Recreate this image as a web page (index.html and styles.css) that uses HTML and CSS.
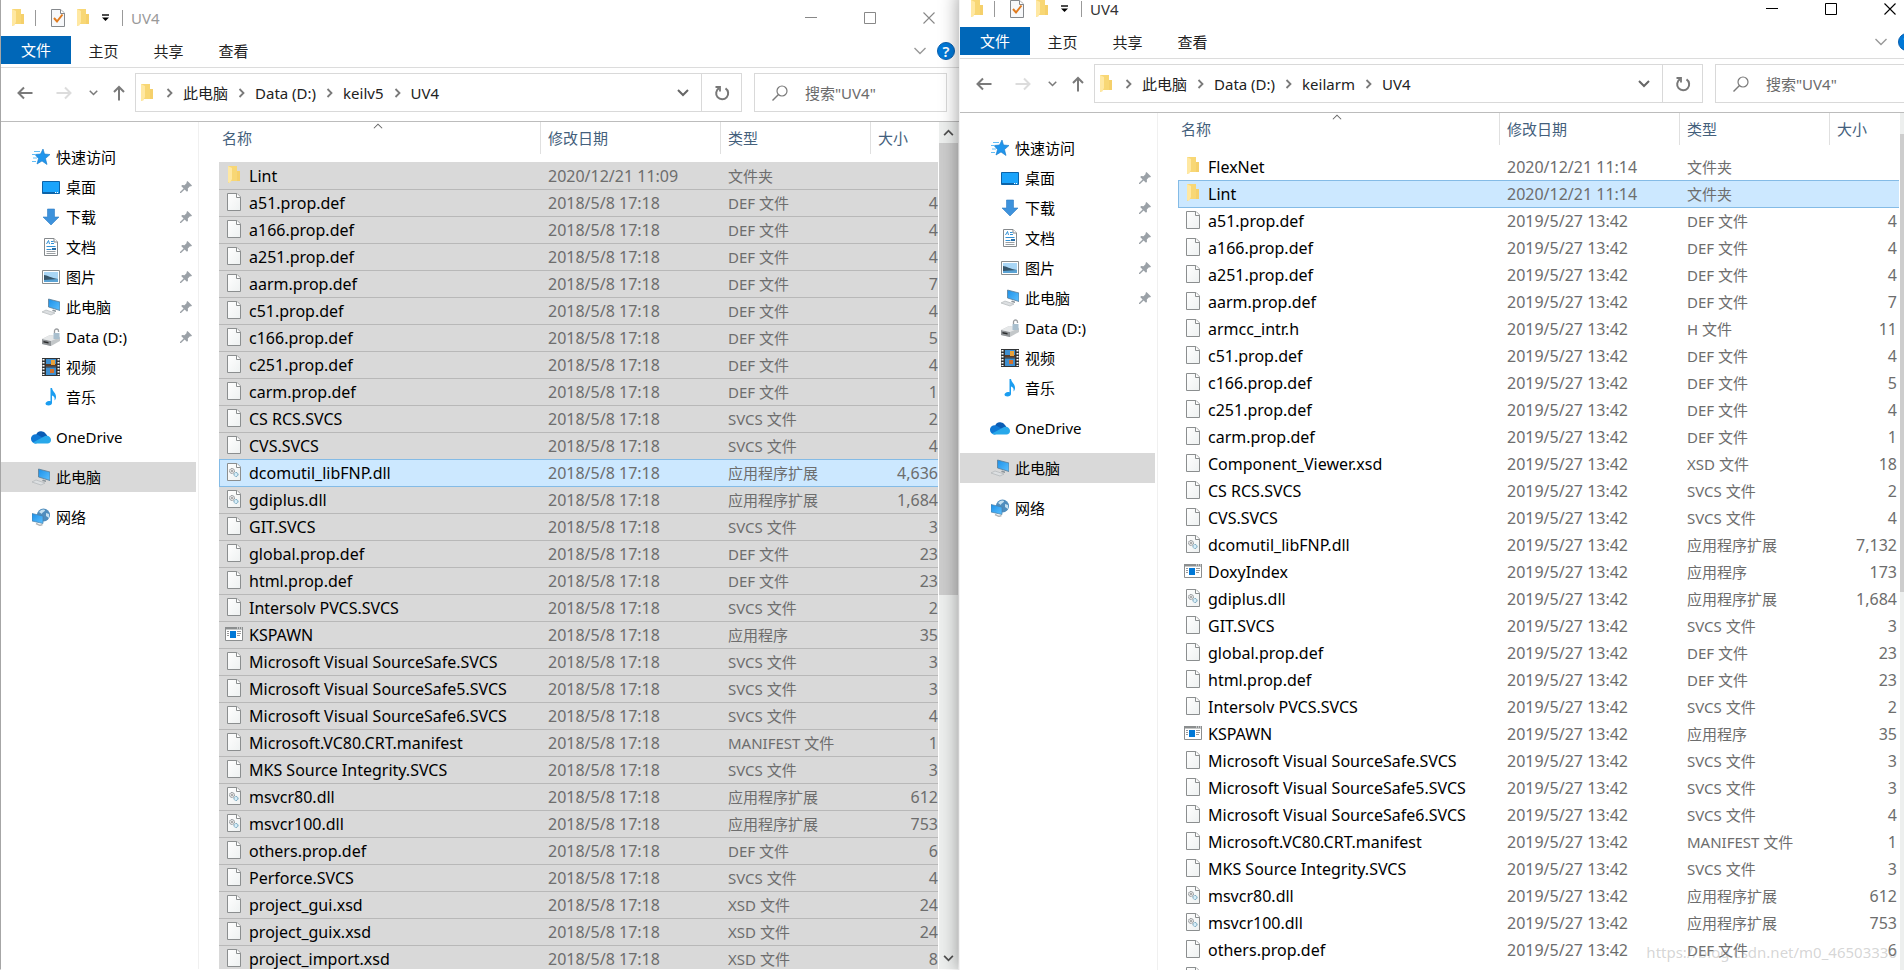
FILE: index.html
```
<!DOCTYPE html>
<html lang="zh-CN">
<head>
<meta charset="utf-8">
<title>UV4</title>
<link rel="stylesheet" href="styles.css">
</head>
<body>
<svg class="defs" aria-hidden="true">
  <defs>
    <linearGradient id="paper" x1="0" y1="0" x2="1" y2="1"><stop offset="0" stop-color="#fff"/><stop offset="1" stop-color="#eef1f1"/></linearGradient>
    <linearGradient id="sky" x1="0" y1="0" x2="1" y2="1"><stop offset="0" stop-color="#1c90e8"/><stop offset="1" stop-color="#5cc0ff"/></linearGradient>
  </defs>
  <symbol id="folder" viewBox="0 0 18 18"><path d="M3 0h9v5h3v10H6l-3 2z" fill="#f8d775"/><path d="M3 0l4 2v11l-2 4-2-1z" fill="#ffe8a2"/><path d="M12 5h3v10h-3z" fill="#f5d06b"/></symbol>
  <symbol id="doc" viewBox="0 0 18 18"><path d="M2.5.5h9.500l3.500 3.500v13.500h-13z" fill="url(#paper)" stroke="#8b8e8f"/><path d="M11.500.5v4h4" fill="#fff" stroke="#8b8e8f"/></symbol>
  <symbol id="dll" viewBox="0 0 18 18"><use href="#doc"/><circle cx="7" cy="8" r="2.500" fill="#e3e3e3" stroke="#7c8185" stroke-dasharray="1.200 .5"/><circle cx="7" cy="8" r=".8" fill="#666"/><circle cx="11" cy="11.500" r="2" fill="#d7eef9" stroke="#5f97b2" stroke-dasharray="1.200 .5"/></symbol>
  <symbol id="exe" viewBox="0 0 18 18"><path d="M.5 2.500h17v13H.5z" fill="#fff" stroke="#8b8e8f"/><path d="M0 2h18v2.500H0z" fill="#8b8e8f"/><path d="M12 3h1m1 0h1m1 0h1" stroke="#fff"/><path d="M5 6h6v7H5z" fill="#0078d7"/><path d="M2 6.500h2M2 8.500h2M2 10.500h2M12 6.500h4M12 8.500h4M12 10.500h3" stroke="#999"/></symbol>
  <symbol id="check" viewBox="0 0 18 18"><path d="M2.500.5h9l4 3.500v13.500h-13z" fill="#f7f8fa" stroke="#85888c"/><path d="M11.500.5v4h4" fill="#fff" stroke="#85888c"/><path d="M5 9l3 3.500L13.500 5.500" fill="none" stroke="#e07b1f" stroke-width="2"/></symbol>
  <symbol id="star" viewBox="0 0 18 18"><path d="M11 1l1.500 5 5.500.5-4.500 4 1.500 6-5-3.500-5 3 1.500-5.500L3 6.500l5.500-.5z" fill="#2095ec" stroke="#1478c8" stroke-width=".6"/><path d="M2 3.500h6M0 6.500h4M1 10h4M0 13.500h4" stroke="#63bdf5"/></symbol>
  <symbol id="desktop" viewBox="0 0 18 18"><path d="M.5 3.500h17v12H.5z" fill="#1ba4fb" stroke="#0c63a8"/><path d="M1 14.500h13" stroke="#0c63a8"/><path d="M13 14.500h1m1 0h1" stroke="#fff"/></symbol>
  <symbol id="down" viewBox="0 0 18 18"><path d="M5.500 1h7v8H17l-8 8-8-8h4.500z" fill="#3d92dc" stroke="#2f7cc4" stroke-width=".6"/></symbol>
  <symbol id="text" viewBox="0 0 18 18"><path d="M2.500.5h9.500l3.500 3.500v13.500h-13z" fill="#fff" stroke="#85898c"/><path d="M12 .5v3.500h3.500" fill="#fff" stroke="#85898c"/><path d="M4.500 6l2-3.500 1 3.500M9 3.500h2.500M9 5.500h3M4.500 8.500h9M4.500 11.500h5" fill="none" stroke="#3191d6"/><path d="M4.500 13.500h9M4.500 15.500h9" stroke="#9a9fa3"/><path d="M10 10h4v2h-4z" fill="#2a6fa8"/></symbol>
  <symbol id="image" viewBox="0 0 18 18"><path d="M.5 2.500h17v13H.5z" fill="#fff" stroke="#8b8e8f"/><path d="M2 4h14v10H2z" fill="#a9d6f5"/><path d="M2 7c3 0 7 3 14 4v3H2z" fill="#36566b"/><path d="M2 12l14-1v3H2z" fill="#5ba3d4"/></symbol>
  <symbol id="pc" viewBox="0 0 18 18"><path d="M6.500 1l11.500 3v8.500L6.500 9z" fill="url(#sky)" stroke="#5d7c94" stroke-width=".8"/><path d="M11 11.500l3 1v1.500l-4-1z" fill="#8d959a"/><path d="M0 14l4-2 9 3-4 2z" fill="#dcdfe1" stroke="#a9aeb1" stroke-width=".6"/></symbol>
  <symbol id="drive" viewBox="0 0 18 18"><path d="M0 11l8-4 10 2v4l-9 5-9-2z" fill="#c3c7c9"/><path d="M0 11l9 2v5l-9-2z" fill="#8f9396"/><path d="M0 11l8-4 10 2-9 4z" fill="#e6e8e9"/><path d="M1.500 13l5 1v1.500l-5-1z" fill="#2a2c2d"/><path d="M11.500 5h6v6h-6z" fill="#a9bfce"/><path d="M12.500 5V3a2 2 0 0 1 4 0v1" fill="none" stroke="#9a9da0" stroke-width="1.300"/></symbol>
  <symbol id="video" viewBox="0 0 18 18"><path d="M0 0h18v18H0z" fill="#303335"/><path d="M4 1h10v7.500H4zM4 9.500h10V17H4z" fill="#3e8fd0"/><path d="M4 6h10v2.500H4z" fill="#5a3a24"/><path d="M9 2h4v5H9z" fill="#e8a13a"/><path d="M8 11h4v4H8z" fill="#d3712d"/><path d="M1.500 1v16M16.500 1v16" stroke="#fff" stroke-width="2" stroke-dasharray="1.500 1.500"/></symbol>
  <symbol id="music" viewBox="0 0 18 18"><path d="M8.500 0h1.500c.5 4 4.500 5 4 9.500-.2 1.500-1 2.500-1.500 3 .8-3.500-1-4.500-2.500-5v7.500c0 1.500-1.500 2.500-3.500 2.500S3.500 16.500 3.500 15.500s1.500-2.500 3.500-2.500c.6 0 1 0 1.500.3z" fill="#1b9df0"/></symbol>
  <symbol id="cloud" viewBox="0 0 20 14"><path d="M5 5a5.500 5.500 0 0 1 10-1c1 1 1.500 2 1.500 3L8 10z" fill="#0a5cb4"/><path d="M0 9a4.500 4.500 0 0 1 6.500-4.300L14 9l-9 4.500A4.500 4.500 0 0 1 0 9z" fill="#0f78d4"/><path d="M2 12.500L14 6c3-1 6 .8 6 4 0 2-1.500 3.500-3.500 3.500h-12c-1 0-2-.4-2.500-1z" fill="#28a8ea"/></symbol>
  <symbol id="net" viewBox="0 0 18 18"><circle cx="11.500" cy="7" r="6.500" fill="#4f8dbd"/><path d="M7 4c2-3 5-3 6-2 0 2-3 2-3 4zM14 5l3 1v4l-3-2z" fill="#c4e0f0"/><path d="M0 5.500l11 2.500v7.500L0 13z" fill="url(#sky)" stroke="#4a7ea6" stroke-width=".7"/><path d="M4 15.500l4 2 2.500-1" fill="none" stroke="#b3b8bb" stroke-width="1.400"/></symbol>
  <symbol id="pin" viewBox="0 0 12 12"><path d="M7.500 0L12 4.500 11 5.500l-1-.2L7.800 7.600l.2 2.200L7 10.800 4.600 8.400 1 12H0v-1l3.600-3.600L1.200 5l1-1 2.300.2L6.700 2l-.2-1z" fill="#9ba1a7"/></symbol>
  <symbol id="left" viewBox="0 0 16 14"><path d="M15.500 7H1.500M7 1.500L1.500 7 7 12.500" fill="none" stroke="currentColor" stroke-width="2"/></symbol>
  <symbol id="right" viewBox="0 0 16 14"><path d="M.5 7h14M9 1.500L14.500 7 9 12.500" fill="none" stroke="currentColor" stroke-width="2"/></symbol>
  <symbol id="up" viewBox="0 0 12 16"><path d="M6 15.500V2M1 7l5-5 5 5" fill="none" stroke="currentColor" stroke-width="2"/></symbol>
  <symbol id="chev" viewBox="0 0 12 8"><path d="M1 1l5 5 5-5" fill="none" stroke="currentColor" stroke-width="2"/></symbol>
  <symbol id="thin" viewBox="0 0 12 8"><path d="M.5 1L6 6.500 11.500 1" fill="none" stroke="currentColor" stroke-width="1.400"/></symbol>
  <symbol id="sep" viewBox="0 0 6 10"><path d="M1 1l4 4-4 4" fill="none" stroke="currentColor" stroke-width="1.800"/></symbol>
  <symbol id="reload" viewBox="0 0 16 16"><path d="M5 3.200A6 6 0 1 0 11.500 3.300" fill="none" stroke="currentColor" stroke-width="2"/><path d="M1.500 2H6v4.500" fill="none" stroke="currentColor" stroke-width="1.800"/></symbol>
  <symbol id="find" viewBox="0 0 16 16"><circle cx="10" cy="6" r="5" fill="none" stroke="currentColor" stroke-width="1.200"/><path d="M6.500 9.500L.5 15.500" stroke="currentColor" stroke-width="1.400"/></symbol>
  <symbol id="more" viewBox="0 0 8 8"><path d="M0 1h7" stroke="currentColor" stroke-width="1.400"/><path d="M0 3.500h7L3.500 7z" fill="currentColor"/></symbol>
  <symbol id="min" viewBox="0 0 12 12"><path d="M0 5.500h12" stroke="currentColor"/></symbol>
  <symbol id="max" viewBox="0 0 12 12"><path d="M.5.5h11v11H.5z" fill="none" stroke="currentColor"/></symbol>
  <symbol id="close" viewBox="0 0 12 12"><path d="M.5.5l11 11M11.500.5l-11 11" stroke="currentColor" stroke-width="1.100"/></symbol>
</svg>

<div class="screen">
<section class="window selected-all" aria-label="UV4">
  <header class="title">
    <svg class="icon"><use href="#folder"/></svg><i class="rule"></i>
    <button class="quick" aria-label="属性"><svg class="icon"><use href="#check"/></svg></button>
    <button class="quick" aria-label="新建文件夹"><svg class="icon"><use href="#folder"/></svg></button>
    <button class="more" aria-label="自定义"><svg><use href="#more"/></svg></button><i class="rule"></i>
    <h1>UV4</h1>
    <div class="controls">
      <button aria-label="最小化"><svg><use href="#min"/></svg></button>
      <button aria-label="最大化"><svg><use href="#max"/></svg></button>
      <button aria-label="关闭"><svg><use href="#close"/></svg></button>
    </div>
  </header>
  <nav class="ribbon">
    <button class="tab file">文件</button><button class="tab">主页</button><button class="tab">共享</button><button class="tab">查看</button>
    <button class="fold" aria-label="展开功能区"><svg><use href="#thin"/></svg></button>
    <button class="help" aria-label="帮助">?</button>
  </nav>
  <div class="bar">
    <button class="go" aria-label="后退"><svg class="arrow"><use href="#left"/></svg></button>
    <button class="go off" aria-label="前进"><svg class="arrow"><use href="#right"/></svg></button>
    <button class="recent" aria-label="最近"><svg class="small"><use href="#chev"/></svg></button>
    <button class="parent" aria-label="上移"><svg class="tall"><use href="#up"/></svg></button>
    <div class="address">
      <svg class="icon"><use href="#folder"/></svg>
      <svg class="sep"><use href="#sep"/></svg><button>此电脑</button>
      <svg class="sep"><use href="#sep"/></svg><button>Data (D:)</button>
      <svg class="sep"><use href="#sep"/></svg><button>keilv5</button>
      <svg class="sep"><use href="#sep"/></svg><button>UV4</button>
      <button class="drop" aria-label="历史"><svg class="drop-icon"><use href="#chev"/></svg></button>
      <button class="reload" aria-label="刷新"><svg><use href="#reload"/></svg></button>
    </div>
    <label class="search"><svg><use href="#find"/></svg><input type="search" aria-label="搜索" placeholder='搜索"UV4"'></label>
  </div>
  <div class="content">
    <nav class="tree">
      <a href="#"><svg class="icon"><use href="#star"/></svg>快速访问</a>
      <a href="#" class="sub"><svg class="icon"><use href="#desktop"/></svg>桌面<svg class="pin"><use href="#pin"/></svg></a>
      <a href="#" class="sub"><svg class="icon"><use href="#down"/></svg>下载<svg class="pin"><use href="#pin"/></svg></a>
      <a href="#" class="sub"><svg class="icon"><use href="#text"/></svg>文档<svg class="pin"><use href="#pin"/></svg></a>
      <a href="#" class="sub"><svg class="icon"><use href="#image"/></svg>图片<svg class="pin"><use href="#pin"/></svg></a>
      <a href="#" class="sub"><svg class="icon"><use href="#pc"/></svg>此电脑<svg class="pin"><use href="#pin"/></svg></a>
      <a href="#" class="sub"><svg class="icon"><use href="#drive"/></svg>Data (D:)<svg class="pin"><use href="#pin"/></svg></a>
      <a href="#" class="sub"><svg class="icon"><use href="#video"/></svg>视频</a>
      <a href="#" class="sub"><svg class="icon"><use href="#music"/></svg>音乐</a>
      <a href="#" class="root"><svg class="icon cloud"><use href="#cloud"/></svg>OneDrive</a>
      <a href="#" class="root current"><svg class="icon"><use href="#pc"/></svg>此电脑</a>
      <a href="#" class="root"><svg class="icon"><use href="#net"/></svg>网络</a>
    </nav>
    <div class="list">
      <table>
        <colgroup><col><col class="c-date"><col class="c-type"><col class="c-size"></colgroup>
        <thead><tr><th><span>名称<svg class="sort"><use href="#thin"/></svg></span></th><th><span>修改日期</span></th><th><span>类型</span></th><th><span>大小</span></th></tr></thead>
        <tbody>
          <tr><td><svg><use href="#folder"/></svg>Lint</td><td>2020/12/21 11:09</td><td>文件夹</td><td></td></tr>
          <tr><td><svg><use href="#doc"/></svg>a51.prop.def</td><td>2018/5/8 17:18</td><td>DEF 文件</td><td>4</td></tr>
          <tr><td><svg><use href="#doc"/></svg>a166.prop.def</td><td>2018/5/8 17:18</td><td>DEF 文件</td><td>4</td></tr>
          <tr><td><svg><use href="#doc"/></svg>a251.prop.def</td><td>2018/5/8 17:18</td><td>DEF 文件</td><td>4</td></tr>
          <tr><td><svg><use href="#doc"/></svg>aarm.prop.def</td><td>2018/5/8 17:18</td><td>DEF 文件</td><td>7</td></tr>
          <tr><td><svg><use href="#doc"/></svg>c51.prop.def</td><td>2018/5/8 17:18</td><td>DEF 文件</td><td>4</td></tr>
          <tr><td><svg><use href="#doc"/></svg>c166.prop.def</td><td>2018/5/8 17:18</td><td>DEF 文件</td><td>5</td></tr>
          <tr><td><svg><use href="#doc"/></svg>c251.prop.def</td><td>2018/5/8 17:18</td><td>DEF 文件</td><td>4</td></tr>
          <tr><td><svg><use href="#doc"/></svg>carm.prop.def</td><td>2018/5/8 17:18</td><td>DEF 文件</td><td>1</td></tr>
          <tr><td><svg><use href="#doc"/></svg>CS RCS.SVCS</td><td>2018/5/8 17:18</td><td>SVCS 文件</td><td>2</td></tr>
          <tr><td><svg><use href="#doc"/></svg>CVS.SVCS</td><td>2018/5/8 17:18</td><td>SVCS 文件</td><td>4</td></tr>
          <tr class="active"><td><svg><use href="#dll"/></svg>dcomutil_libFNP.dll</td><td>2018/5/8 17:18</td><td>应用程序扩展</td><td>4,636</td></tr>
          <tr><td><svg><use href="#dll"/></svg>gdiplus.dll</td><td>2018/5/8 17:18</td><td>应用程序扩展</td><td>1,684</td></tr>
          <tr><td><svg><use href="#doc"/></svg>GIT.SVCS</td><td>2018/5/8 17:18</td><td>SVCS 文件</td><td>3</td></tr>
          <tr><td><svg><use href="#doc"/></svg>global.prop.def</td><td>2018/5/8 17:18</td><td>DEF 文件</td><td>23</td></tr>
          <tr><td><svg><use href="#doc"/></svg>html.prop.def</td><td>2018/5/8 17:18</td><td>DEF 文件</td><td>23</td></tr>
          <tr><td><svg><use href="#doc"/></svg>Intersolv PVCS.SVCS</td><td>2018/5/8 17:18</td><td>SVCS 文件</td><td>2</td></tr>
          <tr><td><svg><use href="#exe"/></svg>KSPAWN</td><td>2018/5/8 17:18</td><td>应用程序</td><td>35</td></tr>
          <tr><td><svg><use href="#doc"/></svg>Microsoft Visual SourceSafe.SVCS</td><td>2018/5/8 17:18</td><td>SVCS 文件</td><td>3</td></tr>
          <tr><td><svg><use href="#doc"/></svg>Microsoft Visual SourceSafe5.SVCS</td><td>2018/5/8 17:18</td><td>SVCS 文件</td><td>3</td></tr>
          <tr><td><svg><use href="#doc"/></svg>Microsoft Visual SourceSafe6.SVCS</td><td>2018/5/8 17:18</td><td>SVCS 文件</td><td>4</td></tr>
          <tr><td><svg><use href="#doc"/></svg>Microsoft.VC80.CRT.manifest</td><td>2018/5/8 17:18</td><td>MANIFEST 文件</td><td>1</td></tr>
          <tr><td><svg><use href="#doc"/></svg>MKS Source Integrity.SVCS</td><td>2018/5/8 17:18</td><td>SVCS 文件</td><td>3</td></tr>
          <tr><td><svg><use href="#dll"/></svg>msvcr80.dll</td><td>2018/5/8 17:18</td><td>应用程序扩展</td><td>612</td></tr>
          <tr><td><svg><use href="#dll"/></svg>msvcr100.dll</td><td>2018/5/8 17:18</td><td>应用程序扩展</td><td>753</td></tr>
          <tr><td><svg><use href="#doc"/></svg>others.prop.def</td><td>2018/5/8 17:18</td><td>DEF 文件</td><td>6</td></tr>
          <tr><td><svg><use href="#doc"/></svg>Perforce.SVCS</td><td>2018/5/8 17:18</td><td>SVCS 文件</td><td>4</td></tr>
          <tr><td><svg><use href="#doc"/></svg>project_gui.xsd</td><td>2018/5/8 17:18</td><td>XSD 文件</td><td>24</td></tr>
          <tr><td><svg><use href="#doc"/></svg>project_guix.xsd</td><td>2018/5/8 17:18</td><td>XSD 文件</td><td>24</td></tr>
          <tr><td><svg><use href="#doc"/></svg>project_import.xsd</td><td>2018/5/8 17:18</td><td>XSD 文件</td><td>8</td></tr>
        </tbody>
      </table>
    </div>
    <div class="scroll"><svg class="flip"><use href="#chev"/></svg><i class="thumb"></i><svg><use href="#chev"/></svg></div>
  </div>
</section>

<section class="window front" aria-label="UV4">
  <header class="title">
    <svg class="icon"><use href="#folder"/></svg><i class="rule"></i>
    <button class="quick" aria-label="属性"><svg class="icon"><use href="#check"/></svg></button>
    <button class="quick" aria-label="新建文件夹"><svg class="icon"><use href="#folder"/></svg></button>
    <button class="more" aria-label="自定义"><svg><use href="#more"/></svg></button><i class="rule"></i>
    <h1>UV4</h1>
    <div class="controls">
      <button aria-label="最小化"><svg><use href="#min"/></svg></button>
      <button aria-label="最大化"><svg><use href="#max"/></svg></button>
      <button aria-label="关闭"><svg><use href="#close"/></svg></button>
    </div>
  </header>
  <nav class="ribbon">
    <button class="tab file">文件</button><button class="tab">主页</button><button class="tab">共享</button><button class="tab">查看</button>
    <button class="fold" aria-label="展开功能区"><svg><use href="#thin"/></svg></button>
    <button class="help" aria-label="帮助">?</button>
  </nav>
  <div class="bar">
    <button class="go" aria-label="后退"><svg class="arrow"><use href="#left"/></svg></button>
    <button class="go off" aria-label="前进"><svg class="arrow"><use href="#right"/></svg></button>
    <button class="recent" aria-label="最近"><svg class="small"><use href="#chev"/></svg></button>
    <button class="parent" aria-label="上移"><svg class="tall"><use href="#up"/></svg></button>
    <div class="address">
      <svg class="icon"><use href="#folder"/></svg>
      <svg class="sep"><use href="#sep"/></svg><button>此电脑</button>
      <svg class="sep"><use href="#sep"/></svg><button>Data (D:)</button>
      <svg class="sep"><use href="#sep"/></svg><button>keilarm</button>
      <svg class="sep"><use href="#sep"/></svg><button>UV4</button>
      <button class="drop" aria-label="历史"><svg class="drop-icon"><use href="#chev"/></svg></button>
      <button class="reload" aria-label="刷新"><svg><use href="#reload"/></svg></button>
    </div>
    <label class="search"><svg><use href="#find"/></svg><input type="search" aria-label="搜索" placeholder='搜索"UV4"'></label>
  </div>
  <div class="content">
    <nav class="tree">
      <a href="#"><svg class="icon"><use href="#star"/></svg>快速访问</a>
      <a href="#" class="sub"><svg class="icon"><use href="#desktop"/></svg>桌面<svg class="pin"><use href="#pin"/></svg></a>
      <a href="#" class="sub"><svg class="icon"><use href="#down"/></svg>下载<svg class="pin"><use href="#pin"/></svg></a>
      <a href="#" class="sub"><svg class="icon"><use href="#text"/></svg>文档<svg class="pin"><use href="#pin"/></svg></a>
      <a href="#" class="sub"><svg class="icon"><use href="#image"/></svg>图片<svg class="pin"><use href="#pin"/></svg></a>
      <a href="#" class="sub"><svg class="icon"><use href="#pc"/></svg>此电脑<svg class="pin"><use href="#pin"/></svg></a>
      <a href="#" class="sub"><svg class="icon"><use href="#drive"/></svg>Data (D:)</a>
      <a href="#" class="sub"><svg class="icon"><use href="#video"/></svg>视频</a>
      <a href="#" class="sub"><svg class="icon"><use href="#music"/></svg>音乐</a>
      <a href="#" class="root"><svg class="icon cloud"><use href="#cloud"/></svg>OneDrive</a>
      <a href="#" class="root current"><svg class="icon"><use href="#pc"/></svg>此电脑</a>
      <a href="#" class="root"><svg class="icon"><use href="#net"/></svg>网络</a>
    </nav>
    <div class="list">
      <table>
        <colgroup><col><col class="c-date"><col class="c-type"><col class="c-size"></colgroup>
        <thead><tr><th><span>名称<svg class="sort"><use href="#thin"/></svg></span></th><th><span>修改日期</span></th><th><span>类型</span></th><th><span>大小</span></th></tr></thead>
        <tbody>
          <tr><td><svg><use href="#folder"/></svg>FlexNet</td><td>2020/12/21 11:14</td><td>文件夹</td><td></td></tr>
          <tr class="active"><td><svg><use href="#folder"/></svg>Lint</td><td>2020/12/21 11:14</td><td>文件夹</td><td></td></tr>
          <tr><td><svg><use href="#doc"/></svg>a51.prop.def</td><td>2019/5/27 13:42</td><td>DEF 文件</td><td>4</td></tr>
          <tr><td><svg><use href="#doc"/></svg>a166.prop.def</td><td>2019/5/27 13:42</td><td>DEF 文件</td><td>4</td></tr>
          <tr><td><svg><use href="#doc"/></svg>a251.prop.def</td><td>2019/5/27 13:42</td><td>DEF 文件</td><td>4</td></tr>
          <tr><td><svg><use href="#doc"/></svg>aarm.prop.def</td><td>2019/5/27 13:42</td><td>DEF 文件</td><td>7</td></tr>
          <tr><td><svg><use href="#doc"/></svg>armcc_intr.h</td><td>2019/5/27 13:42</td><td>H 文件</td><td>11</td></tr>
          <tr><td><svg><use href="#doc"/></svg>c51.prop.def</td><td>2019/5/27 13:42</td><td>DEF 文件</td><td>4</td></tr>
          <tr><td><svg><use href="#doc"/></svg>c166.prop.def</td><td>2019/5/27 13:42</td><td>DEF 文件</td><td>5</td></tr>
          <tr><td><svg><use href="#doc"/></svg>c251.prop.def</td><td>2019/5/27 13:42</td><td>DEF 文件</td><td>4</td></tr>
          <tr><td><svg><use href="#doc"/></svg>carm.prop.def</td><td>2019/5/27 13:42</td><td>DEF 文件</td><td>1</td></tr>
          <tr><td><svg><use href="#doc"/></svg>Component_Viewer.xsd</td><td>2019/5/27 13:42</td><td>XSD 文件</td><td>18</td></tr>
          <tr><td><svg><use href="#doc"/></svg>CS RCS.SVCS</td><td>2019/5/27 13:42</td><td>SVCS 文件</td><td>2</td></tr>
          <tr><td><svg><use href="#doc"/></svg>CVS.SVCS</td><td>2019/5/27 13:42</td><td>SVCS 文件</td><td>4</td></tr>
          <tr><td><svg><use href="#dll"/></svg>dcomutil_libFNP.dll</td><td>2019/5/27 13:42</td><td>应用程序扩展</td><td>7,132</td></tr>
          <tr><td><svg><use href="#exe"/></svg>DoxyIndex</td><td>2019/5/27 13:42</td><td>应用程序</td><td>173</td></tr>
          <tr><td><svg><use href="#dll"/></svg>gdiplus.dll</td><td>2019/5/27 13:42</td><td>应用程序扩展</td><td>1,684</td></tr>
          <tr><td><svg><use href="#doc"/></svg>GIT.SVCS</td><td>2019/5/27 13:42</td><td>SVCS 文件</td><td>3</td></tr>
          <tr><td><svg><use href="#doc"/></svg>global.prop.def</td><td>2019/5/27 13:42</td><td>DEF 文件</td><td>23</td></tr>
          <tr><td><svg><use href="#doc"/></svg>html.prop.def</td><td>2019/5/27 13:42</td><td>DEF 文件</td><td>23</td></tr>
          <tr><td><svg><use href="#doc"/></svg>Intersolv PVCS.SVCS</td><td>2019/5/27 13:42</td><td>SVCS 文件</td><td>2</td></tr>
          <tr><td><svg><use href="#exe"/></svg>KSPAWN</td><td>2019/5/27 13:42</td><td>应用程序</td><td>35</td></tr>
          <tr><td><svg><use href="#doc"/></svg>Microsoft Visual SourceSafe.SVCS</td><td>2019/5/27 13:42</td><td>SVCS 文件</td><td>3</td></tr>
          <tr><td><svg><use href="#doc"/></svg>Microsoft Visual SourceSafe5.SVCS</td><td>2019/5/27 13:42</td><td>SVCS 文件</td><td>3</td></tr>
          <tr><td><svg><use href="#doc"/></svg>Microsoft Visual SourceSafe6.SVCS</td><td>2019/5/27 13:42</td><td>SVCS 文件</td><td>4</td></tr>
          <tr><td><svg><use href="#doc"/></svg>Microsoft.VC80.CRT.manifest</td><td>2019/5/27 13:42</td><td>MANIFEST 文件</td><td>1</td></tr>
          <tr><td><svg><use href="#doc"/></svg>MKS Source Integrity.SVCS</td><td>2019/5/27 13:42</td><td>SVCS 文件</td><td>3</td></tr>
          <tr><td><svg><use href="#dll"/></svg>msvcr80.dll</td><td>2019/5/27 13:42</td><td>应用程序扩展</td><td>612</td></tr>
          <tr><td><svg><use href="#dll"/></svg>msvcr100.dll</td><td>2019/5/27 13:42</td><td>应用程序扩展</td><td>753</td></tr>
          <tr><td><svg><use href="#doc"/></svg>others.prop.def</td><td>2019/5/27 13:42</td><td>DEF 文件</td><td>6</td></tr>
          <tr><td><svg><use href="#doc"/></svg></td><td></td><td></td><td></td></tr>
        </tbody>
      </table>
    </div>
    <div class="scroll"><svg class="flip"><use href="#chev"/></svg><i class="thumb"></i><svg><use href="#chev"/></svg></div>
  </div>
</section>
</div>
<p class="watermark">https://blog.csdn.net/m0_46503330</p>
</body>
</html>
```
FILE: styles.css
```
* { box-sizing: border-box; }
body {
  margin: 0;
  height: 100vh;
  overflow: hidden;
  position: relative;
  background: #fff;
  color: #000;
  font: 15px/20px "Noto Sans", "Noto Sans CJK SC", sans-serif;
}
.defs { position: absolute; width: 0; height: 0; }
button {
  margin: 0;
  padding: 0;
  border: 0;
  background: none;
  color: inherit;
  font: inherit;
  display: flex;
  align-items: center;
  justify-content: center;
}
svg { flex: none; display: block; }
.icon { width: 18px; height: 18px; }

/* The second window runs slightly past the right edge of the screen */
.screen {
  display: grid;
  grid-template-columns: 959fr 961fr;
  width: calc(100% + 16px);
  height: 100%;
}
.window {
  min-width: 0;
  height: 100vh;
  display: flex;
  flex-direction: column;
  background: #fff;
  border-left: 1px solid #a6a6a6;
  border-bottom: 1px solid #fff;
}
.front {
  margin-top: -9px;
  height: calc(100vh + 9px);
  border-left-color: #f4f4f4;
  border-bottom: 0;
  box-shadow: 0 0 18px rgba(0, 0, 0, .4);
  z-index: 1;
}

.title {
  flex: none;
  height: 36px;
  display: flex;
  align-items: center;
  padding: 0 1px 0 8px;
}
.title .rule { width: 1px; height: 16px; margin-left: 8px; background: #999; }
.quick { margin-left: 7px; }
.rule + .quick { margin-left: 13px; }
.more { width: 16px; margin-left: 6px; }
.more svg { width: 8px; height: 8px; }
.title h1 { margin: 0 0 0 8px; font-size: 15px; font-weight: 400; color: #999; }
.controls { display: flex; margin-left: auto; color: #888; }
.controls button { width: 59px; height: 34px; }
.controls svg { width: 12px; height: 12px; }
.front h1 { color: #333; }
.front .controls { color: #000; }

.ribbon {
  flex: none;
  height: 32px;
  display: flex;
  align-items: flex-start;
  border-bottom: 1px solid #dcdcdc;
  color: #222;
}
.tab { width: 65px; height: 30px; }
.file { width: 70px; height: 28px; background: #0067b8; color: #fff; }
.fold { margin: 10px 0 0 auto; width: 12px; height: 10px; color: #999; }
.fold svg { width: 12px; height: 8px; }
.help {
  width: 18px;
  height: 18px;
  margin: 6px 4px 0 11px;
  border: 1px solid #0a5fae;
  border-radius: 50%;
  background: #0078d7;
  color: #fff;
  font-weight: 600;
}

.bar {
  flex: none;
  display: flex;
  align-items: center;
  padding: 5px 12px 9px 4px;
  border-bottom: 1px solid #bcbcbc;
  color: #7a7a7a;
}
.go { width: 39px; height: 39px; }
.off { color: #dcdcdc; }
.recent { width: 20px; height: 39px; }
.parent { width: 32px; height: 39px; }
.arrow { width: 16px; height: 14px; }
.small { width: 9px; height: 6px; }
.tall { width: 12px; height: 16px; }
.address {
  flex: 1;
  height: 39px;
  display: flex;
  align-items: center;
  padding-left: 2px;
  border: 1px solid #d9d9d9;
}
.address button { color: #222; }
.address .sep { width: 27px; height: 10px; }
.address .drop { width: 36px; height: 37px; margin-left: auto; color: #666; }
.drop-icon { width: 12px; height: 8px; }
.address .reload { width: 40px; height: 37px; border-left: 1px solid #d9d9d9; color: #777; }
.reload svg { width: 16px; height: 16px; }
.search {
  width: 193px;
  height: 39px;
  margin-left: 12px;
  display: flex;
  align-items: center;
  gap: 17px;
  padding-left: 17px;
  border: 1px solid #d9d9d9;
}
.search svg { width: 16px; height: 16px; }
.search input {
  flex: 1;
  min-width: 0;
  padding: 0;
  border: 0;
  outline: 0;
  background: none;
  font: inherit;
  color: #6b6b6b;
}
.search input::placeholder { color: #6b6b6b; opacity: 1; }

.content { flex: 1; min-height: 0; display: flex; }
.tree {
  flex: none;
  width: 198px;
  padding: 20px 2px 0 0;
  border-right: 1px solid #f0f0f0;
}
.tree a {
  height: 30px;
  display: flex;
  align-items: center;
  gap: 6px;
  padding: 0 4px 0 31px;
  color: #000;
  text-decoration: none;
}
.tree .sub { padding-left: 41px; }
.tree .root { margin-top: 10px; }
.tree .current { background: #d9d9d9; }
.tree .cloud { width: 20px; height: 14px; margin: 0 -1px; }
.pin { width: 12px; height: 12px; margin-left: auto; }

.list { flex: 1; min-width: 0; overflow: hidden; padding: 0 1px 0 20px; }
table { width: 100%; table-layout: fixed; border-collapse: separate; border-spacing: 0; }
.c-date { width: 180px; }
.c-type { width: 150px; }
.c-size { width: 68px; }
.front .c-size { width: 70px; }
th {
  height: 40px;
  padding: 0;
  vertical-align: top;
  text-align: left;
  font-weight: 400;
  color: #44607c;
}
th span { display: block; height: 32px; padding-left: 7px; line-height: 32px; border-left: 1px solid #e0e0e0; }
th:first-child span { position: relative; padding-left: 3px; border: 0; }
.sort {
  position: absolute;
  top: 1px;
  left: calc(50% - 7px);
  width: 10px;
  height: 6px;
  color: #666;
  transform: rotate(180deg);
}
td {
  height: 27px;
  padding: 0 0 0 8px;
  font-size: 16px;
  line-height: 24px;
  white-space: nowrap;
  color: #6d6d6d;
  border-bottom: 1px solid transparent;
}
td:first-child { padding-left: 6px; color: #000; }
td:nth-child(3) { font-size: 15px; }
td:last-child { padding: 0; text-align: right; }
.front td:last-child { padding-right: 2px; }
td svg { display: inline-block; width: 18px; height: 18px; margin-right: 6px; vertical-align: -2px; }
tbody tr:first-child td { height: 28px; border-top: 1px solid transparent; }
.selected-all td { background: #d9d9d9; border-bottom-color: #b8b8b8; }
.window .active td { background: #cce8ff; border-bottom-color: #84bbe6; }
.window .active td:first-child { box-shadow: inset 1px 0 #84bbe6; }
.window tr:has(+ .active) td { border-bottom-color: #84bbe6; }

.scroll {
  flex: none;
  width: 20px;
  display: flex;
  flex-direction: column;
  align-items: center;
  background: #edefee;
  border-right: 1px solid #fff;
  color: #505050;
}
.scroll svg { width: 11px; height: 7px; margin: 7px 0; }
.scroll .thumb { width: 100%; height: calc(54% - 5px); background: #cdcdcd; margin-bottom: auto; }
.flip { transform: rotate(180deg); }

.watermark {
  position: absolute;
  right: 7px;
  bottom: 8px;
  z-index: 2;
  margin: 0;
  font-size: 15px;
  color: rgba(150, 150, 150, .4);
}
```
